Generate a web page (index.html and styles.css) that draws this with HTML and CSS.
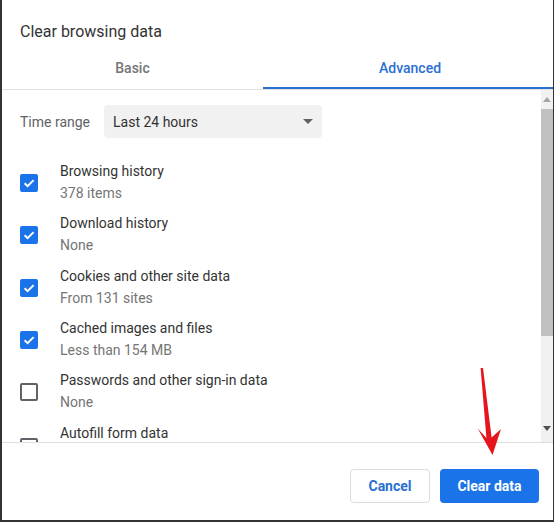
FILE: index.html
```html
<!DOCTYPE html>
<html>
<head>
<meta charset="utf-8">
<link rel="stylesheet" href="styles.css">
</head>
<body>
<div class="dialog">
  <div class="title">Clear browsing data</div>
  <div class="tabs">
    <div class="tab tab-basic">Basic</div>
    <div class="tab tab-adv">Advanced</div>
  </div>
  <div class="body">
    <div class="content">
      <div class="range-row">
        <div class="range-label">Time range</div>
        <div class="select">
          <span>Last 24 hours</span>
          <svg class="caret" width="10" height="5" viewBox="0 0 10 5"><path d="M0 0H10L5 5Z" fill="#5f6368"/></svg>
        </div>
      </div>
      <div class="row">
        <div class="cb checked"><svg width="18" height="18" viewBox="0 0 18 18"><path d="M4.6 9.3L7.6 12.2L13.6 6.1" fill="none" stroke="#fff" stroke-width="2"/></svg></div>
        <div class="texts"><div class="t">Browsing history</div><div class="s">378 items</div></div>
      </div>
      <div class="row">
        <div class="cb checked"><svg width="18" height="18" viewBox="0 0 18 18"><path d="M4.6 9.3L7.6 12.2L13.6 6.1" fill="none" stroke="#fff" stroke-width="2"/></svg></div>
        <div class="texts"><div class="t">Download history</div><div class="s">None</div></div>
      </div>
      <div class="row">
        <div class="cb checked"><svg width="18" height="18" viewBox="0 0 18 18"><path d="M4.6 9.3L7.6 12.2L13.6 6.1" fill="none" stroke="#fff" stroke-width="2"/></svg></div>
        <div class="texts"><div class="t">Cookies and other site data</div><div class="s">From 131 sites</div></div>
      </div>
      <div class="row">
        <div class="cb checked"><svg width="18" height="18" viewBox="0 0 18 18"><path d="M4.6 9.3L7.6 12.2L13.6 6.1" fill="none" stroke="#fff" stroke-width="2"/></svg></div>
        <div class="texts"><div class="t">Cached images and files</div><div class="s">Less than 154 MB</div></div>
      </div>
      <div class="row">
        <div class="cb"></div>
        <div class="texts"><div class="t">Passwords and other sign-in data</div><div class="s">None</div></div>
      </div>
      <div class="row row-last">
        <div class="cb"></div>
        <div class="texts"><div class="t">Autofill form data</div></div>
      </div>
    </div>
    <div class="scrollbar">
      <div class="sb-btn"><svg width="8" height="5" viewBox="0 0 8 5"><path d="M0 5L4 0L8 5Z" fill="#a3a3a3"/></svg></div>
      <div class="sb-thumb"></div>
      <div class="sb-track"></div>
      <div class="sb-btn sb-down"><svg width="8" height="5" viewBox="0 0 8 5"><path d="M0 0L8 0L4 5Z" fill="#505050"/></svg></div>
    </div>
  </div>
  <div class="footer">
    <button class="btn btn-cancel">Cancel</button>
    <button class="btn btn-clear">Clear data</button>
  </div>
  <svg class="red-arrow" width="554" height="522" viewBox="0 0 554 522">
    <path d="M480.6 368L483 368L491.6 437.5L501 429L492.5 455L477.7 428.5L486.4 438Z" fill="#e6141d"/>
  </svg>
</div>
</body>
</html>
```
FILE: styles.css
```css
* { box-sizing: border-box; }
html, body { margin: 0; padding: 0; background: #fff; }
body { width: 554px; height: 522px; overflow: hidden; font-family: Roboto, "Liberation Sans", Arial, sans-serif; }

.dialog {
  position: relative;
  width: 554px;
  height: 522px;
  border-left: 2px solid #333;
  border-right: 1px solid #333;
  border-bottom: 2px solid #333;
  display: flex;
  flex-direction: column;
  background: #fff;
}

.title {
  padding: 21px 0 0 18px;
  font-size: 16px;
  line-height: 22px;
  color: #333;
}

.tabs {
  display: flex;
  border-bottom: 1px solid #e2e2e2;
}
.tab {
  font-size: 14px;
  font-weight: 500;
  line-height: 16px;
  padding: 17px 0 11px;
  text-align: center;
  border-bottom: 2px solid transparent;
}
.tab-basic { width: 261px; color: #757575; }
.tab-adv { flex: 1; color: #2b6fd3; border-bottom-color: #2b6fd3; padding-left: 4px; }

.body {
  height: 352px;
  display: flex;
  overflow: hidden;
}
.content {
  flex: 1;
  padding: 15px 0 0 18px;
  overflow: hidden;
}
.range-row {
  display: flex;
  align-items: center;
  margin-bottom: 17.8px;
}
.range-label {
  width: 84px;
  font-size: 14px;
  color: #5f6368;
}
.select {
  width: 218px;
  height: 33px;
  background: #f1f1f1;
  border-radius: 4px;
  display: flex;
  align-items: center;
  justify-content: space-between;
  padding: 0 9px 0 9px;
  font-size: 14px;
  color: #333;
}
.caret { display: block; }

.row {
  display: flex;
  align-items: center;
  padding: 5.2px 0;
}
.row-last { align-items: flex-start; }
.row-last .cb { margin-top: 15px; }
.cb {
  width: 18px;
  height: 18px;
  border-radius: 2px;
  border: 2px solid #5f6368;
  margin-right: 22px;
  flex: none;
  margin-top: 2px;
}
.cb.checked {
  border: none;
  background: #1a73e8;
}
.cb svg { display: block; }
.texts { display: flex; flex-direction: column; }
.t { font-size: 14px; line-height: 20px; color: #333; }
.s { font-size: 14px; line-height: 20px; margin-top: 2px; color: #757575; }

.scrollbar {
  width: 12px;
  background: #f1f1f1;
  display: flex;
  flex-direction: column;
}
.sb-btn {
  height: 19px;
  display: flex;
  align-items: center;
  justify-content: center;
}
.sb-btn svg { display: block; }
.sb-thumb { height: 227px; background: #c1c1c1; }
.sb-track { flex: 1; }
.sb-down { height: 22px; align-items: flex-start; padding-top: 6px; }

.footer {
  flex: 1;
  border-top: 1px solid #dedede;
  display: flex;
  justify-content: flex-end;
  align-items: flex-start;
  gap: 10px;
  padding: 26px 14px 0 0;
}
.btn {
  height: 34px;
  border-radius: 4px;
  font-family: Roboto, "Liberation Sans", Arial, sans-serif;
  font-size: 14px;
  font-weight: 700;
  padding: 0;
  cursor: pointer;
}
.btn-cancel {
  width: 80px;
  background: #fff;
  border: 1px solid #dadce0;
  color: #2b6fd3;
}
.btn-clear {
  width: 99px;
  background: #1a73e8;
  border: none;
  color: #fff;
}

.red-arrow {
  position: absolute;
  left: -2px;
  top: 0;
  pointer-events: none;
}
```
